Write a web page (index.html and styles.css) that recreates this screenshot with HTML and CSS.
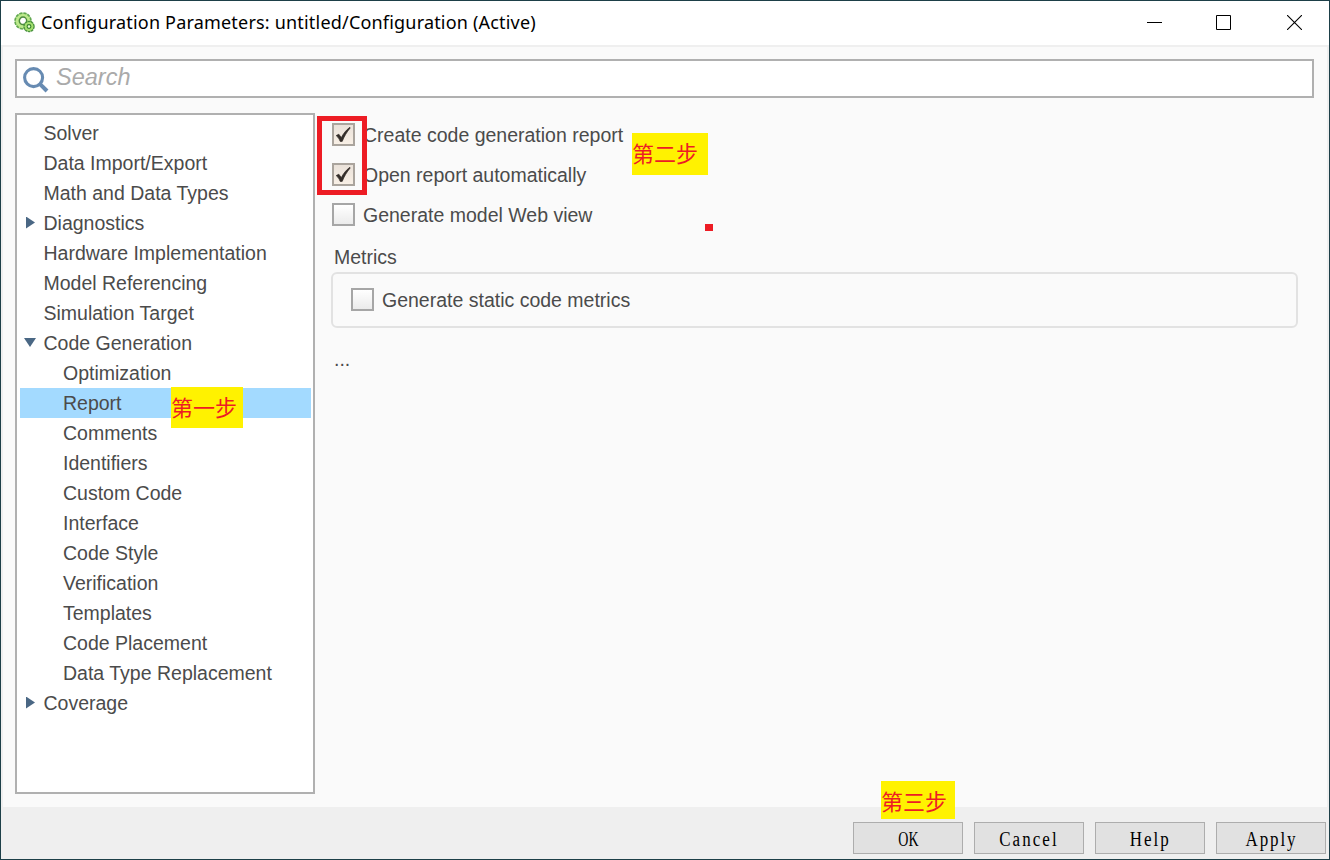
FILE: index.html
```html
<!DOCTYPE html>
<html lang="en">
<head>
<meta charset="utf-8">
<title>Configuration Parameters</title>
<link rel="stylesheet" href="styles.css">
</head>
<body>
<div class="window">
  <header class="titlebar">
    <svg class="app-icon" width="21" height="21" viewBox="0 0 21 21">
      <circle cx="9" cy="9" r="7.8" fill="#b9e884" stroke="#62a850" stroke-width="2" stroke-dasharray="3.2 .9"/>
      <circle cx="9" cy="9" r="7.1" fill="#bdea8c"/>
      <circle cx="9" cy="8.8" r="3.7" fill="#fff" stroke="#4d8b3f" stroke-width="1.5"/>
      <circle cx="15" cy="14.5" r="5" fill="#9fda68" stroke="#4b9440" stroke-width="1.5" stroke-dasharray="2.6 .5"/>
      <circle cx="15" cy="14.5" r="4.3" fill="#a5df70"/>
      <circle cx="15" cy="14.5" r="1.9" fill="#eaffd8" stroke="#35802c" stroke-width="1.1"/>
    </svg>
    <span class="title">Configuration Parameters: untitled/Configuration (Active)</span>
    <div class="controls">
      <svg width="15" height="15" viewBox="0 0 15 15"><path d="M0 7.5H15" stroke="#000"/></svg>
      <svg width="15" height="15" viewBox="0 0 15 15"><path d="M.5.5h14v14H.5z" fill="none" stroke="#000"/></svg>
      <svg width="15" height="15" viewBox="0 0 15 15"><path d="M0 0L15 15M15 0L0 15" stroke="#000" stroke-width="1.1"/></svg>
    </div>
  </header>

  <main class="body">
    <div class="search">
      <svg width="26" height="26" viewBox="0 0 26 26"><circle cx="10.6" cy="10.6" r="9" fill="none" stroke="#678bb2" stroke-width="3.1"/><path d="M17.3 17.3L24 24" stroke="#678bb2" stroke-width="4"/></svg>
      <span class="placeholder">Search</span>
    </div>
    <div class="columns">
      <ul class="tree">
        <li>Solver</li>
        <li>Data Import/Export</li>
        <li>Math and Data Types</li>
        <li class="closed">Diagnostics</li>
        <li>Hardware Implementation</li>
        <li>Model Referencing</li>
        <li>Simulation Target</li>
        <li class="open">Code Generation</li>
        <li class="child">Optimization</li>
        <li class="child selected">Report</li>
        <li class="child">Comments</li>
        <li class="child">Identifiers</li>
        <li class="child">Custom Code</li>
        <li class="child">Interface</li>
        <li class="child">Code Style</li>
        <li class="child">Verification</li>
        <li class="child">Templates</li>
        <li class="child">Code Placement</li>
        <li class="child">Data Type Replacement</li>
        <li class="closed">Coverage</li>
      </ul>
      <section class="pane">
        <div class="option"><span class="box checked"><svg width="23" height="23" viewBox="0 0 23 23"><path d="M4.2 12.6L6.8 11.2L9.3 14.6C11.3 10.6 14 7.2 17.8 4.3L18.2 5C14.8 9 12.3 13.2 10.2 18.4H8.2C7.2 16 6 14 4.2 12.6Z" fill="#332d29" stroke="#332d29" stroke-width=".7"/></svg></span><span>Create code generation report</span></div>
        <div class="option"><span class="box checked"><svg width="23" height="23" viewBox="0 0 23 23"><path d="M4.2 12.6L6.8 11.2L9.3 14.6C11.3 10.6 14 7.2 17.8 4.3L18.2 5C14.8 9 12.3 13.2 10.2 18.4H8.2C7.2 16 6 14 4.2 12.6Z" fill="#332d29" stroke="#332d29" stroke-width=".7"/></svg></span><span>Open report automatically</span></div>
        <div class="option"><span class="box"></span><span>Generate model Web view</span></div>
        <div class="group-title">Metrics</div>
        <div class="group"><span class="box"></span><span>Generate static code metrics</span></div>
        <div class="more">...</div>
      </section>
    </div>
  </main>

  <footer class="footer">
    <button class="btn"><span class="ok">OK</span></button>
    <button class="btn"><span class="cancel">Cancel</span></button>
    <button class="btn"><span class="help">Help</span></button>
    <button class="btn"><span class="apply">Apply</span></button>
  </footer>

  <div class="highlight"></div>
  <div class="dot"></div>
  <div class="note step1">第一步</div>
  <div class="note step2">第二步</div>
  <div class="note step3">第三步</div>
</div>
</body>
</html>
```
FILE: styles.css
```css
* { box-sizing: border-box; }
body { margin: 0; }
.window {
  position: relative;
  display: flex;
  flex-direction: column;
  width: 1330px;
  height: 860px;
  border: 1px solid #1d3f48;
  background: #efefef;
  font-family: "Liberation Sans", Arial, sans-serif;
  font-size: 19.5px;
  color: #4b4b4b;
  overflow: hidden;
}
.titlebar {
  display: flex;
  align-items: center;
  height: 46px;
  padding: 0 27px 2px 13px;
  background: #fff;
  border-bottom: 2px solid #efefef;
}
.app-icon { margin-right: 6px; }
.title {
  font-family: "Noto Sans", sans-serif;
  font-size: 18px;
  line-height: 24px;
  letter-spacing: .19px;
  color: #000;
  white-space: nowrap;
}
.controls { display: flex; gap: 54px; margin-left: auto; }
.controls svg:last-child { margin-left: 2px; }
.body {
  height: 760px;
  margin: 0 2px;
  padding: 12px 13px 0 12px;
  background: #fafafa;
}
.search {
  display: flex;
  height: 39px;
  padding: 6px;
  border: 2px solid #b0b0b0;
  background: #fff;
}
.placeholder {
  margin-left: 7px;
  font-size: 23.5px;
  line-height: 20px;
  font-style: italic;
  color: #aaa;
}
.columns { display: flex; gap: 16px; margin-top: 15px; }
.tree {
  width: 300px;
  height: 681px;
  margin: 0;
  padding: 3px 2px 0 3px;
  border: 2px solid #b0b0b0;
  background: #fff;
  list-style: none;
}
.tree li {
  display: flex;
  align-items: center;
  height: 30px;
  padding-left: 23.5px;
  white-space: nowrap;
}
.tree .child { padding-left: 43px; }
.tree .selected { background: #a3daff; }
.tree .closed, .tree .open { padding-left: 0; }
.closed::before, .open::before {
  content: "";
  background: #4a6784;
}
.closed::before {
  width: 9px;
  height: 12px;
  margin: 0 8.5px 1px 6px;
  clip-path: polygon(0 0, 100% 50%, 0 100%);
}
.open::before {
  width: 12px;
  height: 9px;
  margin: 0 7.5px 1px 4px;
  clip-path: polygon(0 0, 100% 0, 50% 100%);
}
.pane { flex: 1; padding: 2px 16px 0 0; }
.option, .group { display: flex; align-items: center; gap: 8px; height: 40px; }
.option { padding-left: 1px; }
.box {
  width: 23px;
  height: 23px;
  border: 2px solid #a6a6a6;
  background: linear-gradient(#fff, #ebebeb);
  flex: none;
  margin-bottom: 1px;
}
.checked { border-color: #aaa49d; background: linear-gradient(#eae2da, #f8efe5); }
.box svg { display: block; margin: -2px; }
.group-title { height: 37px; padding: 10px 0 0 3px; line-height: 24px; }
.group {
  height: 56px;
  padding-left: 18px;
  border: 2px solid #e2e2e2;
  border-radius: 6px;
}
.more { padding: 19px 0 0 3px; line-height: 24px; }
.footer {
  display: flex;
  flex: 1;
  justify-content: flex-end;
  align-items: flex-start;
  gap: 11px;
  padding: 15px 3px 0;
}
.btn {
  display: flex;
  justify-content: center;
  width: 110px;
  height: 32px;
  padding: 5px 0 0;
  border: 1px solid #adadad;
  background: #e1e1e1;
  color: #000;
  font: 20px/22px "Liberation Serif", "Times New Roman", serif;
}
.btn span { display: block; }
.ok { transform: scaleX(.7); }
.cancel { letter-spacing: 2.4px; transform: scaleX(.85); }
.help { letter-spacing: 2.4px; transform: scaleX(.85); }
.apply { letter-spacing: 2.2px; transform: scaleX(.85); }
.highlight {
  position: absolute;
  left: 316px;
  top: 115px;
  width: 50px;
  height: 79px;
  border: 5px solid #ed1c24;
}
.dot {
  position: absolute;
  left: 704px;
  top: 223px;
  width: 8px;
  height: 7px;
  background: #ed1c24;
}
.note {
  position: absolute;
  background: #fff200;
  color: #ed1c24;
  font-family: "Noto Sans CJK SC", sans-serif;
  font-size: 22px;
  font-weight: 400;
  line-height: 38px;
  white-space: nowrap;
}
.step1 { left: 170px; top: 386px; width: 72px; height: 41px; }
.step2 { left: 631px; top: 132px; width: 76px; height: 42px; }
.step3 { left: 880px; top: 780px; width: 74px; height: 38px; }
```
